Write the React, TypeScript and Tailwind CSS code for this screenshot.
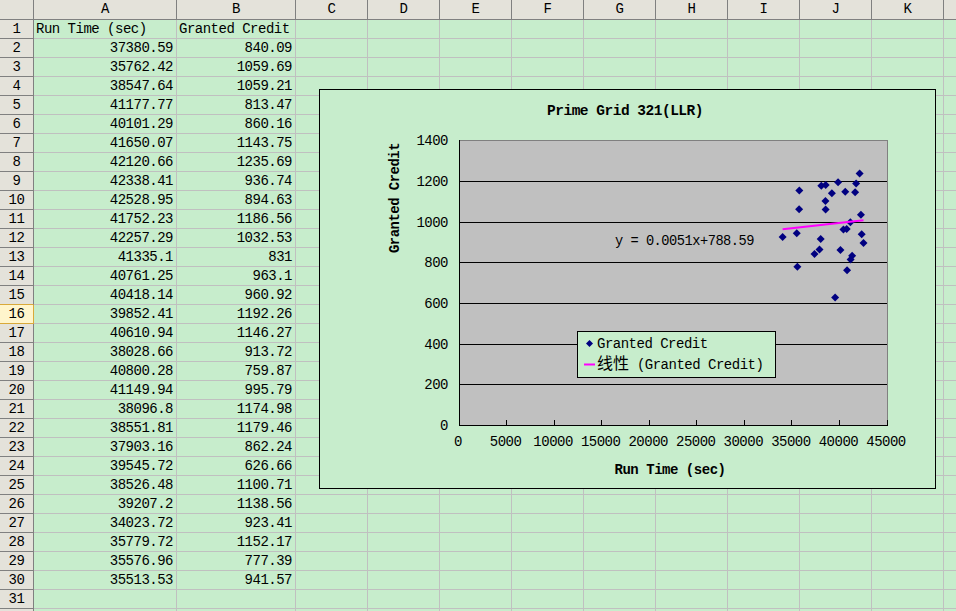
import React from "react";

const data: [string, string][] = [
  ["37380.59", "840.09"],
  ["35762.42", "1059.69"],
  ["38547.64", "1059.21"],
  ["41177.77", "813.47"],
  ["40101.29", "860.16"],
  ["41650.07", "1143.75"],
  ["42120.66", "1235.69"],
  ["42338.41", "936.74"],
  ["42528.95", "894.63"],
  ["41752.23", "1186.56"],
  ["42257.29", "1032.53"],
  ["41335.1", "831"],
  ["40761.25", "963.1"],
  ["40418.14", "960.92"],
  ["39852.41", "1192.26"],
  ["40610.94", "1146.27"],
  ["38028.66", "913.72"],
  ["40800.28", "759.87"],
  ["41149.94", "995.79"],
  ["38096.8", "1174.98"],
  ["38551.81", "1179.46"],
  ["37903.16", "862.24"],
  ["39545.72", "626.66"],
  ["38526.48", "1100.71"],
  ["39207.2", "1138.56"],
  ["34023.72", "923.41"],
  ["35779.72", "1152.17"],
  ["35576.96", "777.39"],
  ["35513.53", "941.57"],
];

const cols: { letter: string; w: string }[] = [
  { letter: "A", w: "w-[143px]" },
  { letter: "B", w: "w-[119px]" },
  { letter: "C", w: "w-[72px]" },
  { letter: "D", w: "w-[72px]" },
  { letter: "E", w: "w-[72px]" },
  { letter: "F", w: "w-[72px]" },
  { letter: "G", w: "w-[72px]" },
  { letter: "H", w: "w-[72px]" },
  { letter: "I", w: "w-[72px]" },
  { letter: "J", w: "w-[72px]" },
  { letter: "K", w: "w-[72px]" },
  { letter: "", w: "w-[72px]" },
];

function cellText(row: number, col: number): { text: string; right: boolean } {
  if (row === 1) {
    if (col === 0) return { text: "Run Time (sec)", right: false };
    if (col === 1) return { text: "Granted Credit", right: false };
    return { text: "", right: false };
  }
  const d = data[row - 2];
  if (d && col < 2) return { text: d[col], right: true };
  return { text: "", right: false };
}

function Chart() {
  const px = (x: number) => 139 + (x * 428) / 45000;
  const py = (y: number) => 335 - (y * 285) / 1400;
  const gridRows = [50, 91, 132, 172, 213, 254, 294, 335];
  const yLabels = [1400, 1200, 1000, 800, 600, 400, 200, 0];
  const xs = data.map((d) => parseFloat(d[0]));
  const minX = Math.min(...xs);
  const maxX = Math.max(...xs);
  const f = (x: number) => 0.0051 * x + 788.59;
  return (
    <div className="absolute left-[319px] top-[89px] w-[617px] h-[400px] border border-black bg-[#c7edcc]">
      <svg width="615" height="398" viewBox="0 0 615 398">
        <text x="305" y="21" textAnchor="middle" dominantBaseline="central" fontSize="15" fontWeight="bold" textLength="156" lengthAdjust="spacingAndGlyphs">
          Prime Grid 321(LLR)
        </text>
        <rect x="139" y="50" width="428" height="285" fill="#c0c0c0" />
        {gridRows.slice(1, 7).map((r) => (
          <line key={r} x1="139" x2="567" y1={r + 0.5} y2={r + 0.5} stroke="#000" strokeWidth="1" />
        ))}
        <line x1="139" x2="568" y1="50.5" y2="50.5" stroke="#808080" strokeWidth="1" />
        <line x1="567.5" x2="567.5" y1="50" y2="336" stroke="#808080" strokeWidth="1" />
        <line x1="139.5" x2="139.5" y1="50" y2="336" stroke="#000" strokeWidth="1" />
        <line x1="139" x2="568" y1="335.5" y2="335.5" stroke="#000" strokeWidth="1" />
        {Array.from({ length: 10 }, (_, i) => {
          const x = Math.floor(px(i * 5000)) + 0.5;
          return <line key={i} x1={x} x2={x} y1="330" y2="335" stroke="#000" strokeWidth="1" />;
        })}
        {yLabels.map((v, i) => (
          <text key={v} x="128" y={gridRows[i] + 1} textAnchor="end" dominantBaseline="central" fontSize="14" letterSpacing="-0.5">
            {v}
          </text>
        ))}
        {Array.from({ length: 10 }, (_, i) => (
          <text key={i} x={px(i * 5000) - 1} y="352" textAnchor="middle" dominantBaseline="central" fontSize="14" letterSpacing="-0.5">
            {i * 5000}
          </text>
        ))}
        <text
          x="75"
          y="108"
          textAnchor="middle"
          dominantBaseline="central"
          fontSize="15"
          fontWeight="bold"
          textLength="110"
          lengthAdjust="spacingAndGlyphs"
          transform="rotate(-90 75 108)"
        >
          Granted Credit
        </text>
        <text x="350" y="380" textAnchor="middle" dominantBaseline="central" fontSize="15" fontWeight="bold" textLength="111" lengthAdjust="spacingAndGlyphs">
          Run Time (sec)
        </text>
        {data.map((d, i) => {
          const cx = px(parseFloat(d[0]));
          const cy = py(parseFloat(d[1]));
          return (
            <polygon
              key={i}
              points={`${cx},${cy - 4} ${cx + 4},${cy} ${cx},${cy + 4} ${cx - 4},${cy}`}
              fill="#000080"
            />
          );
        })}
        <line x1={px(minX)} y1={py(f(minX))} x2={px(maxX)} y2={py(f(maxX))} stroke="#ff00ff" strokeWidth="2" />
        <text x="295" y="151" dominantBaseline="central" fontSize="14" textLength="139" lengthAdjust="spacingAndGlyphs">
          y = 0.0051x+788.59
        </text>
        <rect x="257.5" y="241.5" width="198" height="46" fill="#c7edcc" stroke="#000" strokeWidth="1" />
        <polygon points="269.5,250 273,253.5 269.5,257 266,253.5" fill="#000080" />
        <text x="277" y="254" dominantBaseline="central" fontSize="14" letterSpacing="-0.5">
          Granted Credit
        </text>
        <line x1="264" x2="275" y1="274.5" y2="274.5" stroke="#ff00ff" strokeWidth="2" />
        <text x="277" y="275" dominantBaseline="central" fontSize="14" letterSpacing="-0.5">
          <tspan fontSize="16" letterSpacing="0">线性</tspan> (Granted Credit)
        </text>
      </svg>
    </div>
  );
}

export default function App() {
  const rows = Array.from({ length: 32 }, (_, i) => i + 1);
  return (
    <div className="relative w-[956px] h-[611px] overflow-hidden bg-[#c7edcc] text-black text-[14px] tracking-[-0.5px] font-['Liberation_Mono','Noto_Sans_CJK_SC',monospace]">
      <div className="flex h-[20px]">
        <div className="w-[34px] shrink-0 bg-[#e4e2da] border-r border-b border-[#808080]" />
        {cols.map((c, i) => (
          <div
            key={i}
            className={`${c.w} shrink-0 bg-[#e4e2da] border-r border-b border-[#808080] flex items-center justify-center leading-[19px]`}
          >
            {c.letter}
          </div>
        ))}
      </div>
      {rows.map((r) => (
        <div key={r} className="flex h-[19px]">
          <div
            className={`w-[34px] shrink-0 border-r border-b flex items-center justify-center leading-[18px] ${
              r === 16
                ? "bg-[#fff5cc] border-[#d9a93a]"
                : r === 15
                ? "bg-[#e4e2da] border-r-[#808080] border-b-[#d9a93a]"
                : "bg-[#e4e2da] border-[#808080]"
            }`}
          >
            {r <= 31 ? r : ""}
          </div>
          {cols.map((c, ci) => {
            const t = cellText(r, ci);
            return (
              <div
                key={ci}
                className={`${c.w} shrink-0 border-r border-b border-[#c0c0c0] bg-[#c7edcc] flex items-center leading-[18px] whitespace-nowrap overflow-hidden ${
                  t.right ? "justify-end pr-[3px]" : "justify-start pl-[2px]"
                }`}
              >
                {t.text}
              </div>
            );
          })}
        </div>
      ))}
      <Chart />
    </div>
  );
}
